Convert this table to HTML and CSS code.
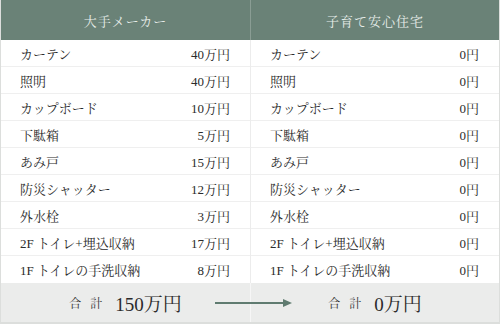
FILE: index.html
```html
<!DOCTYPE html>
<html lang="ja">
<head>
<meta charset="utf-8">
<link rel="stylesheet" href="styles.css">
</head>
<body>
<div class="table">
  <div class="head">
    <div class="hcell">大手メーカー</div>
    <div class="hcell">子育て安心住宅</div>
  </div>
  <div class="body">
    <div class="col">
      <div class="row"><span>カーテン</span><span>40万円</span></div>
      <div class="row"><span>照明</span><span>40万円</span></div>
      <div class="row"><span>カップボード</span><span>10万円</span></div>
      <div class="row"><span>下駄箱</span><span>5万円</span></div>
      <div class="row"><span>あみ戸</span><span>15万円</span></div>
      <div class="row"><span>防災シャッター</span><span>12万円</span></div>
      <div class="row"><span>外水栓</span><span>3万円</span></div>
      <div class="row"><span>2F トイレ+埋込収納</span><span>17万円</span></div>
      <div class="row"><span>1F トイレの手洗収納</span><span>8万円</span></div>
    </div>
    <div class="col">
      <div class="row"><span>カーテン</span><span>0円</span></div>
      <div class="row"><span>照明</span><span>0円</span></div>
      <div class="row"><span>カップボード</span><span>0円</span></div>
      <div class="row"><span>下駄箱</span><span>0円</span></div>
      <div class="row"><span>あみ戸</span><span>0円</span></div>
      <div class="row"><span>防災シャッター</span><span>0円</span></div>
      <div class="row"><span>外水栓</span><span>0円</span></div>
      <div class="row"><span>2F トイレ+埋込収納</span><span>0円</span></div>
      <div class="row"><span>1F トイレの手洗収納</span><span>0円</span></div>
    </div>
  </div>
  <div class="foot">
    <div class="fcell"><span class="label">合 計</span><span class="total">150万円</span></div>
    <div class="fcell"><span class="label">合 計</span><span class="total">0万円</span></div>
    <svg class="arrow" width="78" height="10" viewBox="0 0 78 10">
      <line x1="0" y1="5" x2="70" y2="5" stroke="#5f7b70" stroke-width="2"/>
      <polygon points="68,1 77,5 68,9" fill="#5f7b70"/>
    </svg>
  </div>
</div>
</body>
</html>
```

FILE: styles.css
```css
* { box-sizing: border-box; }
html, body { margin: 0; padding: 0; background: #fff; }
body {
  width: 500px;
  height: 324px;
  overflow: hidden;
  font-family: "Liberation Serif", "Noto Serif CJK JP", "Noto Sans CJK JP", serif;
  color: #2b2b2b;
}
.table {
  width: 500px;
  border-left: 1px solid #dcdedc;
  border-right: 1px solid #dcdedc;
}
.head {
  display: grid;
  grid-template-columns: 1fr 1fr;
  height: 40px;
  background: #6a8277;
}
.hcell {
  display: flex;
  align-items: center;
  justify-content: center;
  color: #e6ece8;
  font-size: 13px;
  letter-spacing: 1px;
}
.hcell + .hcell { border-left: 1px solid #8a9d94; }
.body {
  display: grid;
  grid-template-columns: 1fr 1fr;
}
.col + .col { border-left: 1px solid #ececec; }
.row {
  height: 27px;
  display: flex;
  align-items: center;
  justify-content: space-between;
  padding: 0 20px 0 19px;
  font-size: 13px;
  border-bottom: 1px solid #efefef;
}
.row:last-child { border-bottom: none; }
.foot {
  position: relative;
  display: grid;
  grid-template-columns: 1fr 1fr;
  height: 41px;
  background: #ebeceb;
  border-bottom: 2px solid #dcdedc;
}
.fcell {
  display: flex;
  align-items: center;
  justify-content: center;
  gap: 10px;
}
.fcell + .fcell { border-left: 1px solid #f6f6f6; }
.label {
  font-size: 12px;
  letter-spacing: 3px;
  color: #333;
}
.total {
  font-size: 19px;
  color: #2a2a2a;
}
.arrow {
  position: absolute;
  left: 214px;
  top: 15px;
}
```
